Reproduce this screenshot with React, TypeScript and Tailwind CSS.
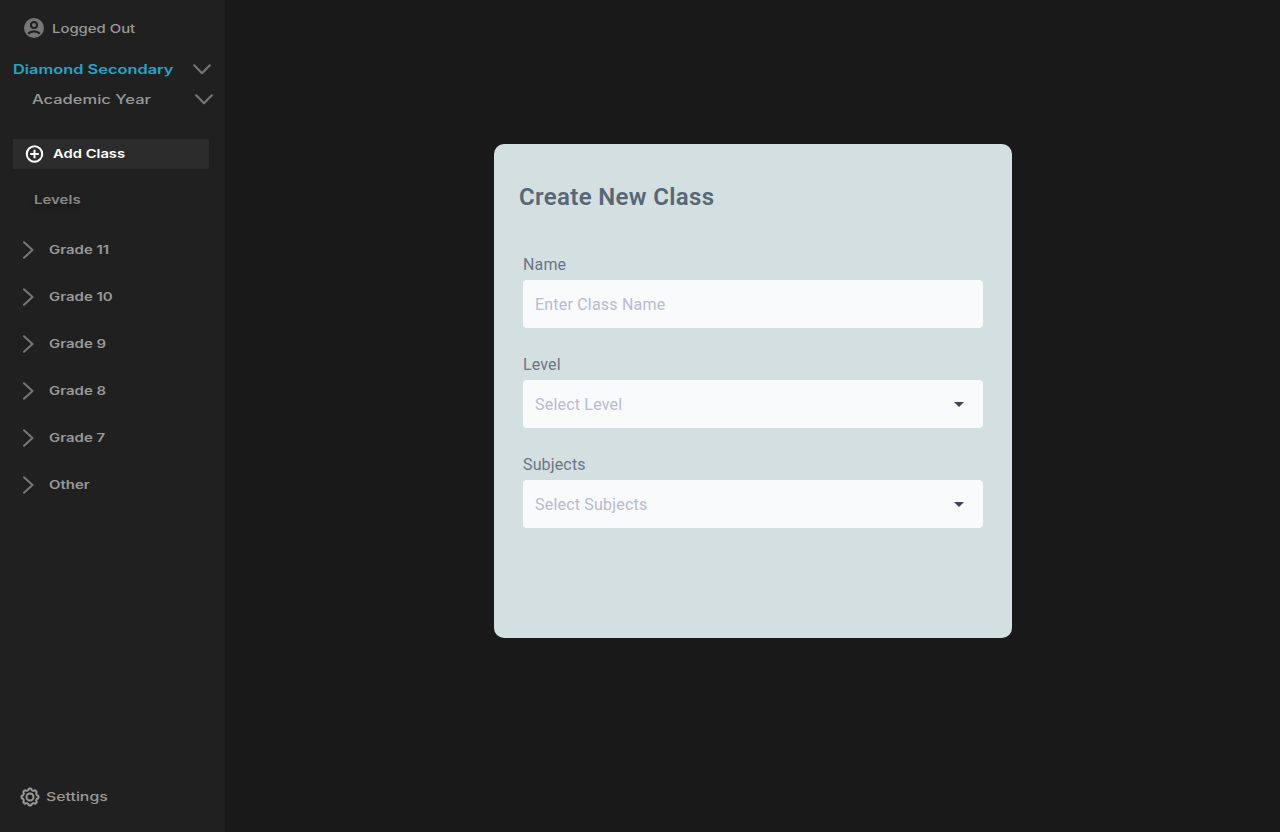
import React from "react";

function Chevron({ right = false }: { right?: boolean }) {
  return right ? (
    <svg width="12" height="18" viewBox="0 0 12 18" fill="none" className="shrink-0">
      <path d="M2 1.2 10.5 9 2 16.8" stroke="#777" strokeWidth="2" strokeLinecap="round" strokeLinejoin="round" />
    </svg>
  ) : (
    <svg width="18" height="11" viewBox="0 0 18 11" fill="none" className="shrink-0">
      <path d="M1.2 1.3 9 9.2 16.8 1.3" stroke="#777" strokeWidth="2" strokeLinecap="round" strokeLinejoin="round" />
    </svg>
  );
}

function UserIcon() {
  return (
    <svg width="20" height="20" viewBox="0 0 20 20" className="shrink-0">
      <circle cx="10" cy="10" r="10" fill="#777" />
      <circle cx="10" cy="7" r="3" fill="none" stroke="#202020" strokeWidth="2" />
      <path d="M4.2 15.7C7 12.6 13 12.6 15.8 15.7" fill="none" stroke="#202020" strokeWidth="2.2" />
    </svg>
  );
}

const gearPath =
  Array.from({ length: 128 }, (_, i) => {
    const a = (i / 128) * Math.PI * 2;
    const r = 7.75 + 0.8 * Math.cos(8 * a);
    const t = a + 0.045 * Math.sin(16 * a);
    return `${i ? "L" : "M"}${(10 + r * Math.cos(t)).toFixed(2)} ${(10 + r * Math.sin(t)).toFixed(2)}`;
  }).join(" ") + "Z";

function GearIcon() {
  return (
    <svg width="20" height="20" viewBox="0 0 20 20" fill="none" stroke="#999" strokeWidth="2" strokeLinejoin="round" className="shrink-0">
      <path d={gearPath} />
      <circle cx="10" cy="10" r="3.5" />
    </svg>
  );
}

const wide = "inline-block origin-left whitespace-nowrap";

const levels = ["Grade 11", "Grade 10", "Grade 9", "Grade 8", "Grade 7", "Other"];

function Sidebar() {
  return (
    <aside className="flex w-[225px] shrink-0 flex-col bg-[#202020] font-['Inter',sans-serif] text-[12px] font-medium text-[#999]">
      <div className="mt-[18px] flex h-5 items-center gap-2 pl-6">
        <UserIcon />
        <span className={`${wide} scale-x-[1.24] pt-0.5`}>Logged Out</span>
      </div>
      <div className="mt-4 flex h-[30px] items-center justify-between pr-3.5 pl-[13px] text-[12.5px] text-[#20a7c9]">
        <span className={`${wide} scale-x-[1.31] pt-0.5 font-semibold`}>Diamond Secondary</span>
        <Chevron />
      </div>
      <div className="flex h-[30px] items-center justify-between pr-[12.5px] pl-8 text-[12.5px]">
        <span className={`${wide} scale-x-[1.32] pt-0.5`}>Academic Year</span>
        <Chevron />
      </div>
      <button className="mt-[25px] ml-[13px] flex h-[30px] w-[196px] items-center gap-[9px] rounded-[1px] bg-[#2c2c2c] pl-3 font-semibold text-white">
        <svg width="19" height="18" viewBox="0 0 19 18" fill="none" stroke="white" strokeWidth="2" className="shrink-0">
          <circle cx="9.5" cy="9" r="7.7" />
          <path d="M9.5 4.7v8.6M5.2 9h8.6" />
        </svg>
        <span className={`${wide} scale-x-[1.23]`}>Add Class</span>
      </button>
      <div className="mt-[15px] flex h-[30px] items-center pl-[34px] font-semibold text-[#888] [text-shadow:0_4px_4px_rgba(0,0,0,0.25)]">
        <span className={`${wide} scale-x-[1.25] pt-0.5`}>Levels</span>
      </div>
      <nav className="mt-3 flex flex-col text-[11.5px] font-semibold">
        {levels.map((label) => (
          <div key={label} className="flex h-[47px] items-center gap-[15px] pl-[22px]">
            <Chevron right />
            <span className={`${wide} scale-x-[1.3] pt-0.5`}>{label}</span>
          </div>
        ))}
      </nav>
      <div className="mt-auto mb-[25px] flex h-5 items-center gap-1.5 pl-5">
        <GearIcon />
        <span className={`${wide} scale-x-[1.32]`}>Settings</span>
      </div>
    </aside>
  );
}

function Field({ label, placeholder, select = false }: { label: string; placeholder: string; select?: boolean }) {
  return (
    <div className="flex h-[76px] flex-col">
      <div className="h-7 pt-px text-base leading-6 tracking-[0.15px] text-[#697586]">{label}</div>
      <div className="flex h-12 items-center justify-between rounded bg-[#f8fafc] pr-[19px] pl-3 text-base text-[#babbcd]">
        <span className="pt-0.5 tracking-[0.2px]">{placeholder}</span>
        {select && (
          <svg width="10" height="5" viewBox="0 0 10 5">
            <path d="M0 0h10L5 5z" fill="#3f4254" />
          </svg>
        )}
      </div>
    </div>
  );
}

export default function App() {
  return (
    <div className="flex h-[832px] w-[1280px] overflow-hidden bg-[#191919]">
      <Sidebar />
      <main className="flex-1 pt-36 pl-[269px]">
        <section className="h-[494px] w-[518px] rounded-[10px] bg-[#d4dfe1] pt-[37px] font-['Roboto',sans-serif]">
          <h1 className="ml-[25px] h-8 text-2xl leading-8 font-semibold tracking-[0.34px] text-[#576776]">Create New Class</h1>
          <div className="mt-[39px] ml-[29px] flex w-[460px] flex-col gap-6">
            <Field label="Name" placeholder="Enter Class Name" />
            <Field label="Level" placeholder="Select Level" select />
            <Field label="Subjects" placeholder="Select Subjects" select />
          </div>
        </section>
      </main>
    </div>
  );
}
